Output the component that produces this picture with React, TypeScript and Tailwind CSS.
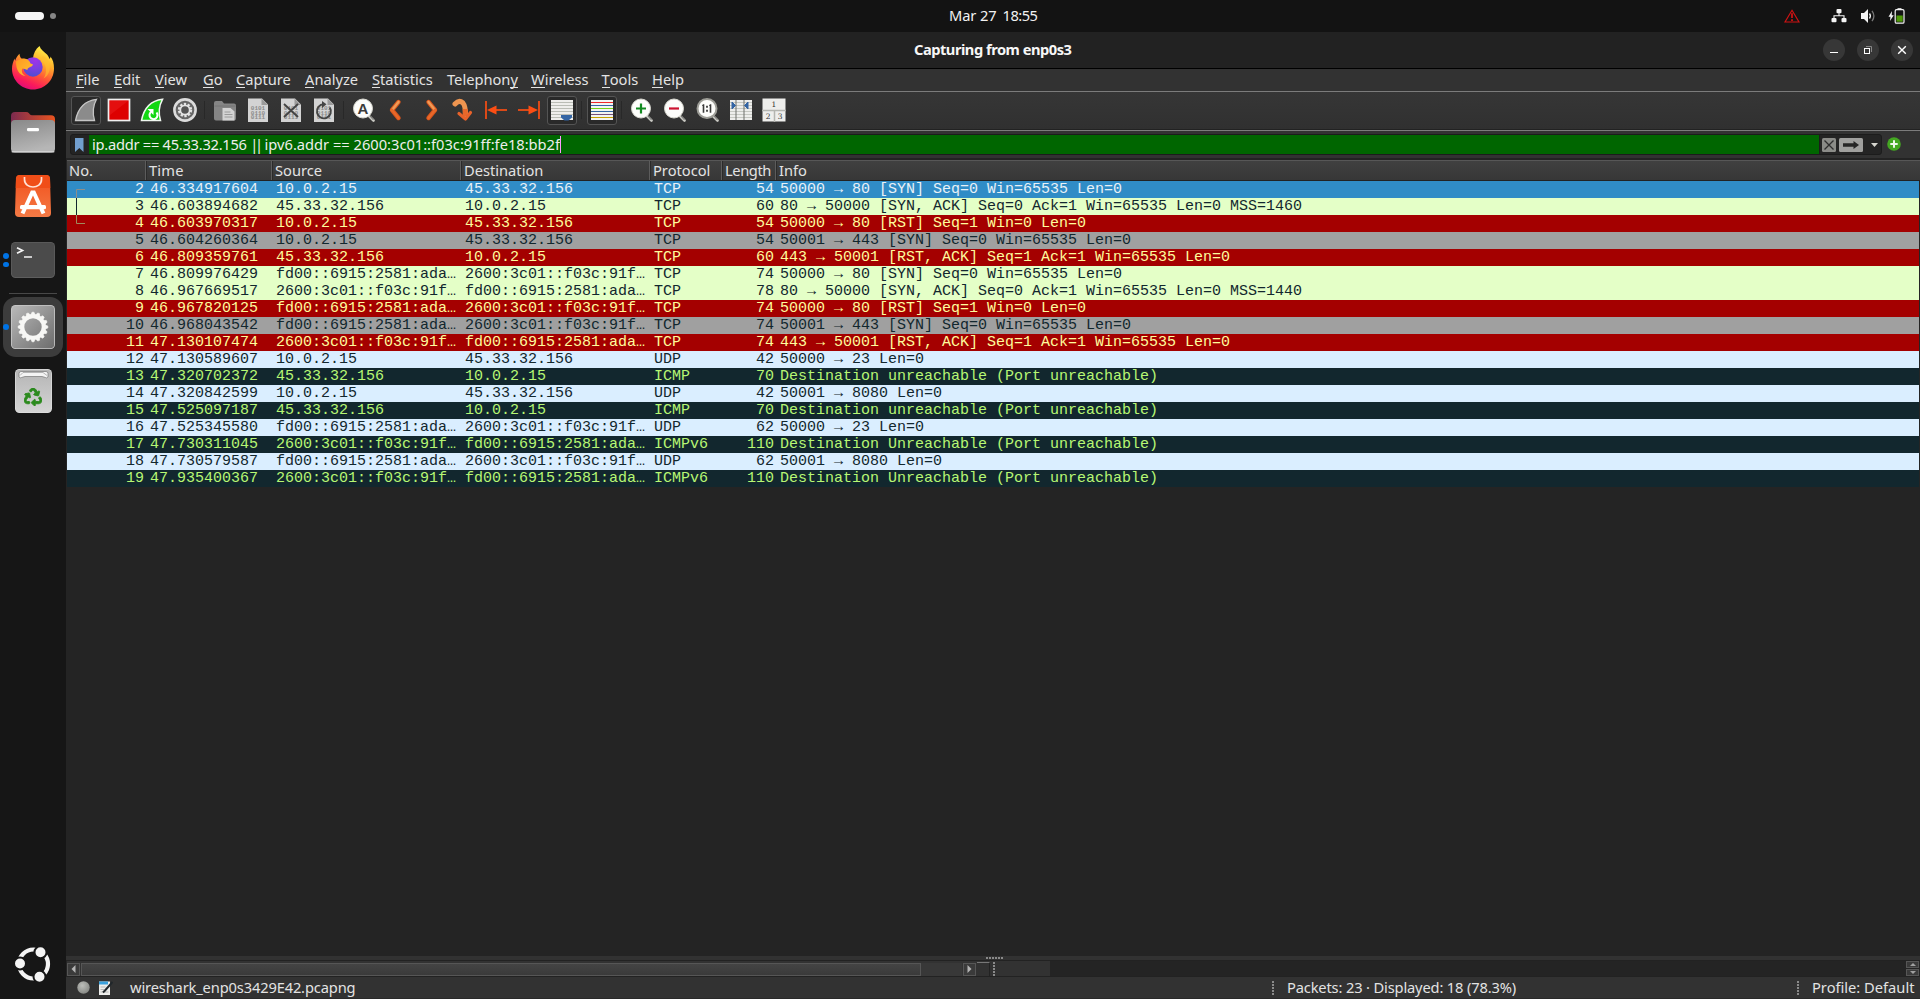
import React from "react";
import { FaRecycle } from "react-icons/fa";

type Kind = "sel" | "tcp" | "rst" | "syn" | "udp" | "icmp";
type Packet = [number, string, string, string, string, number, string, Kind];

const A4 = "10.0.2.15";
const B4 = "45.33.32.156";
const A6 = "fd00::6915:2581:ada…";
const B6 = "2600:3c01::f03c:91f…";

const packets: Packet[] = [
  [2, "46.334917604", A4, B4, "TCP", 54, "50000 → 80 [SYN] Seq=0 Win=65535 Len=0", "sel"],
  [3, "46.603894682", B4, A4, "TCP", 60, "80 → 50000 [SYN, ACK] Seq=0 Ack=1 Win=65535 Len=0 MSS=1460", "tcp"],
  [4, "46.603970317", A4, B4, "TCP", 54, "50000 → 80 [RST] Seq=1 Win=0 Len=0", "rst"],
  [5, "46.604260364", A4, B4, "TCP", 54, "50001 → 443 [SYN] Seq=0 Win=65535 Len=0", "syn"],
  [6, "46.809359761", B4, A4, "TCP", 60, "443 → 50001 [RST, ACK] Seq=1 Ack=1 Win=65535 Len=0", "rst"],
  [7, "46.809976429", A6, B6, "TCP", 74, "50000 → 80 [SYN] Seq=0 Win=65535 Len=0", "tcp"],
  [8, "46.967669517", B6, A6, "TCP", 78, "80 → 50000 [SYN, ACK] Seq=0 Ack=1 Win=65535 Len=0 MSS=1440", "tcp"],
  [9, "46.967820125", A6, B6, "TCP", 74, "50000 → 80 [RST] Seq=1 Win=0 Len=0", "rst"],
  [10, "46.968043542", A6, B6, "TCP", 74, "50001 → 443 [SYN] Seq=0 Win=65535 Len=0", "syn"],
  [11, "47.130107474", B6, A6, "TCP", 74, "443 → 50001 [RST, ACK] Seq=1 Ack=1 Win=65535 Len=0", "rst"],
  [12, "47.130589607", A4, B4, "UDP", 42, "50000 → 23 Len=0", "udp"],
  [13, "47.320702372", B4, A4, "ICMP", 70, "Destination unreachable (Port unreachable)", "icmp"],
  [14, "47.320842599", A4, B4, "UDP", 42, "50001 → 8080 Len=0", "udp"],
  [15, "47.525097187", B4, A4, "ICMP", 70, "Destination unreachable (Port unreachable)", "icmp"],
  [16, "47.525345580", A6, B6, "UDP", 62, "50000 → 23 Len=0", "udp"],
  [17, "47.730311045", B6, A6, "ICMPv6", 110, "Destination Unreachable (Port unreachable)", "icmp"],
  [18, "47.730579587", A6, B6, "UDP", 62, "50001 → 8080 Len=0", "udp"],
  [19, "47.935400367", B6, A6, "ICMPv6", 110, "Destination Unreachable (Port unreachable)", "icmp"],
];

const rowColor: Record<Kind, string> = {
  sel: "bg-[#308cc6] text-[#e8f1f7]",
  tcp: "bg-[#e4ffc7] text-[#12272e]",
  rst: "bg-[#a40000] text-[#fffc9c]",
  syn: "bg-[#a0a0a0] text-[#12272e]",
  udp: "bg-[#daeeff] text-[#12272e]",
  icmp: "bg-[#12272e] text-[#b7f774]",
};

const COLS = "grid grid-cols-[79px_126px_189px_189px_72px_54px_1fr]";

/* ---------- dock ---------- */

function Firefox() {
  return (
    <svg width="44" height="44" viewBox="0 0 44 44">
      <defs>
        <linearGradient id="ffb" x1="0.8" y1="0" x2="0.35" y2="1">
          <stop offset="0.05" stopColor="#fff14a" />
          <stop offset="0.35" stopColor="#ffb02a" />
          <stop offset="0.62" stopColor="#ff5a36" />
          <stop offset="0.85" stopColor="#fb1a5b" />
          <stop offset="1" stopColor="#e00d78" />
        </linearGradient>
        <radialGradient id="ffg" cx="0.6" cy="0.15" r="0.9">
          <stop offset="0" stopColor="#a033e8" />
          <stop offset="0.5" stopColor="#7a3fe0" />
          <stop offset="1" stopColor="#4a4fd0" />
        </radialGradient>
        <linearGradient id="fff" x1="0" y1="0" x2="1" y2="1">
          <stop offset="0" stopColor="#ff9a1f" />
          <stop offset="1" stopColor="#ffc233" />
        </linearGradient>
      </defs>
      <path d="M28.500 0c1 3.500 4.500 5.500 7.500 8.500 1.600 1.700 2 3.500 2.600 4.500.8-.8.900-1.500.8-2.400C42 13.500 43 18 43 22.500 43 34.500 33.500 43.500 22 43.500S1 34 1 23c0-4 1-7.500 2.800-10.500 0 1 .1 1.700.4 2.200.7-2.900 2.300-5 4.300-7 .2 2.200.8 3.700 2 4.900 2.200-.4 4 .1 5.500 1 1.700-1 3.600-1.500 6-1.600C22.500 7.500 24.500 3 28.500 0z" fill="url(#ffb)" />
      <circle cx="22" cy="21" r="9.700" fill="url(#ffg)" />
      <path d="M32 16c3.500 4 4.300 11 .5 16.500 5.500-3 7.700-9.500 5.500-16-.8-2.300-3.500-5.500-6-6.500-1.500 1-2 3.500 0 6z" fill="#ffc02e" opacity="0.600" />
      <path d="M5 15.500c2-1.700 4.500-2.700 7-2.600 3.700-.5 6.700 1.700 7.500 4.600.800.500 2.300.5 2.500 1-.3 1.700-2.400 2.400-4.200 3.200-1.200.6-1.400 1.300-1.300 2.300-2-.5-3.500-1.500-5-1.500-1.700 2.500 0 6 3 7.500C8 29 5 24 5 15.500z" fill="url(#fff)" />
    </svg>
  );
}

function Files() {
  return (
    <svg width="46" height="44" viewBox="0 0 46 44">
      <defs>
        <linearGradient id="flb" x1="0" x2="1">
          <stop offset="0" stopColor="#7b2a4f" />
          <stop offset="1" stopColor="#e95420" />
        </linearGradient>
        <linearGradient id="flf" x1="0" y1="0" x2="0.3" y2="1">
          <stop offset="0" stopColor="#888888" />
          <stop offset="1" stopColor="#b6b6b6" />
        </linearGradient>
      </defs>
      <path d="M1 6q0-4 4-4h11q2 0 3 1.300l1 1.200q.6.700 2 .7h19q4 0 4 4v12H1z" fill="url(#flb)" />
      <rect x="1" y="10" width="44" height="32.500" rx="4" fill="url(#flf)" />
      <rect x="1.500" y="41" width="43" height="1.500" rx="0.700" fill="#d0d0d0" />
      <rect x="17" y="18" width="12" height="3.200" rx="1.200" fill="#fff" />
    </svg>
  );
}

function AppCenter() {
  return (
    <svg width="36" height="42" viewBox="0 0 36 42">
      <defs>
        <linearGradient id="acb" x1="0" y1="0" x2="0" y2="1">
          <stop offset="0" stopColor="#f2501c" />
          <stop offset="1" stopColor="#f47a45" />
        </linearGradient>
      </defs>
      <path d="M1 3.500Q1.200 0 4.500 0h27Q34.800 0 35 3.500L36 38q0 4-4 4H4q-4 0-4-4z" fill="url(#acb)" />
      <path d="M1 3.500Q1.200 0 4.500 0h27Q34.800 0 35 3.500L35.300 13H.7z" fill="#f04e18" />
      <path d="M9.500 2v2.500c0 10 17 10 17 0V2" fill="none" stroke="#ffe2d6" strokeWidth="1.700" />
      <path d="M11 31L17.200 17.500h1.600L25 31M9.800 33.500L7.500 38.500M26.200 33.500l2.300 5" fill="none" stroke="#fff" strokeWidth="4" />
      <rect x="5" y="30" width="26" height="4.200" rx="1.500" fill="#fff" />
    </svg>
  );
}

function TerminalIcon() {
  return (
    <svg width="44" height="36" viewBox="0 0 44 36">
      <rect width="44" height="36" rx="4.500" fill="#5e5e5e" />
      <rect x="0.800" y="0.800" width="42.400" height="34.200" rx="4" fill="#4b4b4b" />
      <path d="M6 5.800l5.500 2.700L6 11.200" fill="none" stroke="#f4f4f4" strokeWidth="1.700" />
      <path d="M13 15h8" stroke="#f4f4f4" strokeWidth="1.500" />
    </svg>
  );
}

function SettingsIcon() {
  const teeth = Array.from({ length: 16 }, (_, i) => i * 22.5);
  return (
    <svg width="44" height="44" viewBox="0 0 44 44">
      <defs>
        <linearGradient id="stb" x1="0" y1="0" x2="1" y2="1">
          <stop offset="0" stopColor="#b9b9b9" />
          <stop offset="1" stopColor="#6d6d6d" />
        </linearGradient>
      </defs>
      <rect width="44" height="44" rx="4.500" fill="#c9c9c9" />
      <rect x="0.800" y="0.800" width="42.400" height="42.400" rx="4" fill="url(#stb)" />
      {teeth.map((a) => (
        <path key={a} d="M20 9.800L21 7.200h2L24 9.800z" fill="#f7f7f5" stroke="#f7f7f5" strokeWidth="0.600" transform={`rotate(${a} 22 22)`} />
      ))}
      <circle cx="22" cy="22" r="10.800" fill="none" stroke="#f7f7f5" strokeWidth="4.200" />
    </svg>
  );
}

function Trash() {
  return (
    <div className="relative flex h-11 w-[37px] justify-center">
      <svg className="absolute inset-0" width="37" height="44" viewBox="0 0 37 44">
        <defs>
          <linearGradient id="trb" x1="0" y1="0" x2="0" y2="1">
            <stop offset="0" stopColor="#b5b5b5" />
            <stop offset="1" stopColor="#d4d4d4" />
          </linearGradient>
        </defs>
        <rect width="37" height="44" rx="4.500" fill="#dedede" />
        <rect x="0.700" y="0.700" width="35.600" height="42.600" rx="4" fill="url(#trb)" />
        <path d="M4 8V4.500q0-2 2-2h25q2 0 2 2V8q-1.500 1.500-2.500.5L27 7.500H10L6.500 8.500Q5 9.500 4 8z" fill="#f4f4f4" stroke="#777" strokeWidth="0.700" />
        <path d="M5 6.500l3-3h20l4 3" fill="none" stroke="#999" strokeWidth="0.700" />
      </svg>
      <FaRecycle className="relative mt-[19px] stroke-[#2b8a1d] stroke-[26px] text-[18px] text-[#2b8a1d]" />
    </div>
  );
}

function UbuntuLogo() {
  return (
    <svg width="36" height="36" viewBox="0 0 36 36">
      <circle cx="18.500" cy="18" r="14.500" fill="none" stroke="#f4f4f4" strokeWidth="4.200" />
      {[[5, 17.500], [25.500, 6.200], [24.500, 30.700]].map(([x, y]) => (
        <circle key={x} cx={x} cy={y} r="6" fill="#f4f4f4" stroke="#161616" strokeWidth="2" />
      ))}
    </svg>
  );
}

function Slot({ children, dots = 0, active = false }: { children: React.ReactNode; dots?: number; active?: boolean }) {
  return (
    <div className="relative flex h-16 w-[66px] shrink-0 items-center justify-center">
      <div className={active ? "flex h-[60px] w-[60px] items-center justify-center rounded-[13px] bg-[#3c3c3c]" : "flex"}>{children}</div>
      <div className="absolute top-0 left-[3px] flex h-full flex-col items-center justify-center gap-[3px]">
        {Array.from({ length: dots }, (_, i) => (
          <span key={i} className="h-[5.500px] w-[5.500px] rounded-full bg-[#0073e5]" />
        ))}
      </div>
    </div>
  );
}

function Dock() {
  return (
    <aside className="flex w-[66px] shrink-0 flex-col bg-[#161616] pt-1">
      <Slot><Firefox /></Slot>
      <Slot><Files /></Slot>
      <Slot><AppCenter /></Slot>
      <Slot dots={2}><TerminalIcon /></Slot>
      <div className="flex h-[3px] items-center justify-center"><span className="h-px w-12 bg-[#484848]" /></div>
      <Slot active dots={1}><SettingsIcon /></Slot>
      <Slot><Trash /></Slot>
      <div className="mt-auto flex justify-center pb-[17px]"><UbuntuLogo /></div>
    </aside>
  );
}

/* ---------- top panel ---------- */

function TopBar() {
  return (
    <header className="grid h-8 grid-cols-[949px_1fr_auto] bg-[#131313] text-[#f2f2f2]">
      <div className="flex items-center gap-[6px] pl-[15px]">
        <span className="h-2 w-[29px] rounded-full bg-[#f6f6f6]" />
        <span className="h-[6px] w-[6px] rounded-full bg-[#868686]" />
      </div>
      <div className="flex text-[14.670px] leading-[30px]">
        <span className="w-[53.500px] tracking-[-0.100px]">Mar 27</span>
        <span className="tracking-[-0.500px]">18:55</span>
      </div>
      <div className="flex items-center pr-[15px]">
        <svg width="16" height="14" viewBox="0 0 16 14" className="mr-[31px]">
          <path d="M8 1.300L15 13H1z" fill="none" stroke="#cf1313" strokeWidth="1.200" />
          <path d="M8 4.200v4.800M8 10.300v1.600" stroke="#cf1313" strokeWidth="1.800" />
        </svg>
        <svg width="16" height="16" viewBox="0 0 16 16" className="mr-[13px]" fill="#f4f4f4">
          <rect x="5.500" y="1" width="5" height="4.300" rx="1" />
          <rect x="0.500" y="10" width="5" height="4.300" rx="1" />
          <rect x="10.500" y="10" width="5" height="4.300" rx="1" />
          <path d="M3 11V7.700h10V11M8 5v3" fill="none" stroke="#f4f4f4" strokeWidth="1.100" />
        </svg>
        <svg width="16" height="16" viewBox="0 0 16 16" className="mr-3">
          <path d="M1 5h3l4-4v14l-4-4H1z" fill="#f4f4f4" />
          <path d="M9.500 5.500q1.800 2.500 0 5" fill="none" stroke="#f4f4f4" strokeWidth="1.300" />
          <path d="M12 2.800q3.800 5.200 0 10.400" fill="none" stroke="#777" strokeWidth="1.300" />
        </svg>
        <svg width="17" height="16" viewBox="0 0 17 16">
          <path d="M4 3L.500 8.800h2L2 13l3.700-5.800h-2z" fill="#f4f4f4" />
          <rect x="7.200" y="1.700" width="8.800" height="13.500" rx="1.300" fill="none" stroke="#f4f4f4" strokeWidth="1.200" />
          <rect x="9.500" y="0.200" width="4" height="1.500" fill="#f4f4f4" />
          <rect x="8.500" y="7.500" width="6.200" height="6.200" fill="#4e9a06" />
        </svg>
      </div>
    </header>
  );
}

function TitleBar() {
  const btn = "flex h-[22px] w-[22px] items-center justify-center rounded-full bg-[#373737]";
  return (
    <div className="grid h-9 grid-cols-[848px_1fr_auto] bg-[#222222]">
      <span />
      <div className="text-[14.670px] leading-[35px] font-bold tracking-[-0.490px] text-[#f7f7f7]">Capturing from enp0s3</div>
      <div className="flex items-center gap-3 pr-[7px]">
        <span className={btn}><svg width="10" height="10" viewBox="0 0 10 10"><path d="M1 7.500h8" stroke="#fff" /></svg></span>
        <span className={btn}>
          <svg width="10" height="10" viewBox="0 0 10 10" fill="none">
            <path d="M3 1.500h5.500V7" stroke="#888" />
            <rect x="1.500" y="3.500" width="5" height="5" stroke="#fff" />
          </svg>
        </span>
        <span className={btn}><svg width="10" height="10" viewBox="0 0 10 10"><path d="M1.200 1.200l7.600 7.600M8.800 1.200L1.200 8.800" stroke="#fff" strokeWidth="1.400" /></svg></span>
      </div>
    </div>
  );
}

/* ---------- menu ---------- */

const menus: [string, string, string, string][] = [
  ["", "F", "ile", "w-[38px]"],
  ["", "E", "dit", "w-[41px]"],
  ["", "V", "iew", "w-[48px]"],
  ["", "G", "o", "w-[33px]"],
  ["", "C", "apture", "w-[69px]"],
  ["", "A", "nalyze", "w-[67px]"],
  ["", "S", "tatistics", "w-[75px]"],
  ["Telephon", "y", "", "w-[84px]"],
  ["", "W", "ireless", "w-[70.500px]"],
  ["", "T", "ools", "w-[50.500px]"],
  ["", "H", "elp", "w-[50px]"],
];

function MenuBar() {
  return (
    <nav className="flex h-[22px] bg-[#323232] pl-[10px] text-[14.670px] leading-[21px] text-[#e3e3e3]">
      {menus.map(([pre, key, post, w]) => (
        <span key={pre + key} className={`${w} shrink-0 whitespace-nowrap`}>
          {pre}
          <span className="inline-block h-[19px] border-b-[1.500px] border-[#e3e3e3] align-top">{key}</span>
          {post}
        </span>
      ))}
    </nav>
  );
}

/* ---------- toolbar ---------- */

function Icon({ children }: { children: React.ReactNode }) {
  return <svg width="24" height="24" viewBox="0 0 24 24" fill="none">{children}</svg>;
}

const FIN = "M1.500 22.500C3.500 12 8.500 3 22.500 1.300C18.500 8.500 18.500 15.500 20.500 22.500Z";

function Doc({ children }: { children?: React.ReactNode }) {
  return (
    <Icon>
      <path d="M2 .5h14l6 6v17.500H2z" fill="#d3d3d3" />
      <path d="M15.500 .5v6.500H22z" fill="#9a9a9a" />
      {["0101", "0110", "0111"].map((bits, i) => (
        <text key={bits} x="4.800" y={12 + i * 4.5} fontSize="6" fontWeight="700" fontFamily="Liberation Mono, monospace" fill="#8b8b8b">{bits}</text>
      ))}
      {children}
    </Icon>
  );
}

function Lens({ children, dark = false }: { children: React.ReactNode; dark?: boolean }) {
  return (
    <Icon>
      <path d="M16.500 17.500l5 5" stroke="#c9c9c3" strokeWidth="2.600" strokeLinecap="round" />
      <path d="M17.500 17.500l4 4.500" stroke="#555" strokeWidth="0.800" />
      <circle cx="11" cy="10.500" r="9.500" fill="#fdfdfb" stroke={dark ? "#9d9d97" : "#d8d8d0"} strokeWidth={dark ? "2" : "1"} />
      {children}
    </Icon>
  );
}

function Chevron({ flip = false }: { flip?: boolean }) {
  return (
    <Icon>
      <g transform={flip ? "translate(25 0) scale(-1 1)" : "translate(-1 0)"}>
        <path d="M14.500 4L8 12l6.500 8" stroke="#d9541b" strokeWidth="4.400" strokeLinecap="round" strokeLinejoin="round" />
        <path d="M14.500 4L8 12" stroke="#f09a55" strokeWidth="2.600" strokeLinecap="round" />
        <path d="M8 12l6.500 8" stroke="#e8682a" strokeWidth="2.600" strokeLinecap="round" />
      </g>
    </Icon>
  );
}

function Tool({ children, on = false }: { children: React.ReactNode; on?: boolean }) {
  return (
    <span className="flex w-[33px] shrink-0 items-center justify-center">
      <span className={on ? "flex h-[29px] w-[30px] items-center justify-center rounded-[3px] border border-[#545454] bg-[#292929]" : "flex"}>{children}</span>
    </span>
  );
}

function Sep() {
  return <span className="ml-[3px] h-[18px] w-1 shrink-0 border-l border-[#282828]" />;
}

function Toolbar() {
  return (
    <div className="flex h-[37px] items-center bg-gradient-to-b from-[#363636] to-[#303030] pb-px pl-[3px]">
      <Tool on>
        <Icon><path d={FIN} fill="#8b8b8b" stroke="#c6c6c6" strokeWidth="1.300" /></Icon>
      </Tool>
      <Tool>
        <Icon>
          <rect x="1.500" y="1.500" width="21" height="21" fill="#dd0000" stroke="#f0f0f0" strokeWidth="1.700" />
          <path d="M3 3h18L3 17z" fill="#ee2222" opacity="0.450" />
        </Icon>
      </Tool>
      <Tool>
        <Icon>
          <path d={FIN} fill="#12d812" stroke="#f0f7f0" strokeWidth="1.500" />
          <path d="M16.500 14.500a4 4 0 1 1-5.500-.5" stroke="#fff" strokeWidth="2" />
          <path d="M7.500 11h6v6z" fill="#fff" />
        </Icon>
      </Tool>
      <Tool>
        <Icon>
          <circle cx="12" cy="12" r="10.600" fill="#666" stroke="#dcdcdc" strokeWidth="2.600" />
          <circle cx="12" cy="12" r="6" stroke="#e4e4e4" strokeWidth="2.400" strokeDasharray="2.300 1.470" />
          <circle cx="12" cy="12" r="4.700" fill="#555" stroke="#e4e4e4" strokeWidth="1.800" />
        </Icon>
      </Tool>
      <Sep />
      <Tool>
        <Icon>
          <path d="M1 5q0-2 2-2h6l2 2.500h10q2 0 2 2v13q0 2-2 2H3q-2 0-2-2z" fill="#858585" />
          <path d="M1.500 8h21" stroke="#747474" />
          <path d="M9.500 10h8l4 3.500v9h-12z" fill="#d3d3d3" />
          <path d="M11.500 14h6M11.500 16.500h8M11.500 19h8" stroke="#9a9a9a" />
        </Icon>
      </Tool>
      <Tool><Doc /></Tool>
      <Tool><Doc><path d="M5 6l14 13M19 6L5 19" stroke="#444" strokeWidth="1.900" /></Doc></Tool>
      <Tool>
        <Doc>
          <path d="M17.800 9.500a7 7 0 1 1-6-3.200" stroke="#444" strokeWidth="1.900" />
          <path d="M10 3l4.500 3.300L10 10z" fill="#444" />
        </Doc>
      </Tool>
      <Sep />
      <Tool>
        <Lens><text x="11" y="15.800" textAnchor="middle" fontSize="15" fontWeight="700" fontFamily="Liberation Sans, sans-serif" fill="#3c3c3c">A</text></Lens>
      </Tool>
      <Tool><Chevron /></Tool>
      <Tool><Chevron flip /></Tool>
      <Tool>
        <Icon>
          <path d="M4 6Q8 1.500 12 5q2.500 3 2.500 12" stroke="#ee9550" strokeWidth="5" strokeLinecap="round" />
          <path d="M14.200 11v7" stroke="#e8682a" strokeWidth="5" />
          <path d="M8 15.500l6.500 5.500 5-6.500" stroke="#e8622a" strokeWidth="3.200" strokeLinecap="round" strokeLinejoin="round" />
        </Icon>
      </Tool>
      <Tool>
        <Icon><path d="M2 3v18" stroke="#fb4e14" strokeWidth="1.700" /><path d="M10 12h13" stroke="#fb4e14" strokeWidth="1.700" /><path d="M3 12l9.500-4.500v9z" fill="#fb4e14" /></Icon>
      </Tool>
      <Tool>
        <Icon><path d="M22 3v18" stroke="#fb4e14" strokeWidth="1.700" /><path d="M1 12h13" stroke="#fb4e14" strokeWidth="1.700" /><path d="M21 12l-9.500-4.500v9z" fill="#fb4e14" /></Icon>
      </Tool>
      <Tool on>
        <Icon>
          <rect x="1" y="2" width="22" height="20" fill="#eeeeec" />
          <path d="M1 4.500h22M1 7.500h22M1 10.500h22M1 13.500h22M1 16.500h22M1 19.500h22" stroke="#babdb6" />
          <path d="M11 17h11v2.500l-3.500 3h-4l-3.500-3z" fill="#3465a4" />
        </Icon>
      </Tool>
      <Sep />
      <Tool on>
        <Icon>
          <rect x="1" y="2" width="22" height="20" fill="#f3f3f1" />
          <path d="M1 4.500h22" stroke="#ef2929" />
          <path d="M1 7.500h22" stroke="#3465a4" />
          <path d="M1 10.500h22" stroke="#73d216" />
          <path d="M1 13.500h22" stroke="#3465a4" />
          <path d="M1 16.500h22" stroke="#75507b" />
          <path d="M1 19.500h22" stroke="#c4a000" />
        </Icon>
      </Tool>
      <Sep />
      <Tool><Lens><path d="M11 5.500v10M6 10.500h10" stroke="#128a20" strokeWidth="2.200" /></Lens></Tool>
      <Tool><Lens><path d="M6 10.500h10" stroke="#cc1230" strokeWidth="2.200" /></Lens></Tool>
      <Tool>
        <Lens dark>
          <path d="M7.500 6.300v8.400M14.500 6.300v8.400" stroke="#3a3a3a" strokeWidth="1.600" />
          <path d="M6.300 7.500h1.500M13.300 7.500h1.500" stroke="#3a3a3a" strokeWidth="1.200" />
          <path d="M11 7.800v2M11 11.800v2" stroke="#3a3a3a" strokeWidth="1.800" />
        </Lens>
      </Tool>
      <Tool>
        <Icon>
          <rect x="1" y="2" width="22" height="20" fill="#eeeeec" />
          <path d="M1 4.500h22M1 7.500h22M1 10.500h22M1 13.500h22M1 16.500h22M1 19.500h22" stroke="#c6c8c2" />
          <path d="M7 2v20M15 2v20" stroke="#6f716d" />
          <path d="M3 4l3.500 3.500L3 11zM19 4l-3.500 3.500L19 11z" fill="#3465a4" stroke="#3465a4" />
        </Icon>
      </Tool>
      <Tool>
        <Icon>
          <rect x="0.500" y="0.500" width="23" height="23" fill="#eeeeec" />
          <path d="M0 12.500h24M12.500 12v12" stroke="#b4b5b0" strokeWidth="1.500" />
          <g fill="#333" fontSize="7.500" fontFamily="DejaVu Serif, serif" textAnchor="middle">
            <text x="12" y="9">1</text><text x="6.200" y="20.800">2</text><text x="18.200" y="20.800">3</text>
          </g>
        </Icon>
      </Tool>
    </div>
  );
}

/* ---------- filter ---------- */

function FilterBar() {
  return (
    <div className="flex h-[27px] bg-[#323232] pt-[3px] pl-1">
      <div className="flex h-[21px] w-[1812px] overflow-hidden rounded-[3px] border border-[#1c1c1c] bg-[#242424]">
        <div className="flex w-[18px] items-center pl-1">
          <svg width="9" height="14" viewBox="0 0 9 14"><path d="M0 0h8.500v14L4.300 10 0 14z" fill="#729fcf" /></svg>
        </div>
        <div className="flex w-[1730px] items-center bg-[#006600] pl-[3px] text-[14.670px] leading-[19px] text-[#eeeeec]">
          <span className="whitespace-pre tracking-[-0.260px]">ip.addr == 45.33.32.156 <span className="tracking-[-3.200px]">||</span><span className="ml-[0.800px] tracking-[0px]"> ipv6.addr == 2600:3c01::f03c:91ff:fe18:bb2f</span></span>
          <span className="h-[17px] w-px bg-[#ff99ff]" />
        </div>
        <div className="flex flex-1 items-center border-l border-[#1c1c1c] pl-[2px]">
          <svg width="14" height="14" viewBox="0 0 14 14"><rect width="14" height="14" rx="1.500" fill="#8b8c88" /><path d="M2.500 2.500l9 9M11.500 2.500l-9 9" stroke="#2e2e2e" strokeWidth="1.300" /></svg>
          <svg className="ml-[3px]" width="24" height="14" viewBox="0 0 24 14"><rect width="24" height="14" rx="1.500" fill="#a0a09e" /><path d="M4 5.200h10.500V3L20 7l-5.500 4V8.800H4z" fill="#262626" /></svg>
          <svg className="ml-2" width="7" height="4" viewBox="0 0 7 4"><path d="M0 0h7L3.500 4z" fill="#d6d6cf" /></svg>
        </div>
      </div>
      <svg className="mt-[3px] ml-[5px]" width="14" height="14" viewBox="0 0 14 14">
        <circle cx="7" cy="7" r="6.800" fill="#44a722" />
        <path d="M7 3.300v7.400M3.300 7h7.400" stroke="#eef7ea" strokeWidth="2" />
      </svg>
    </div>
  );
}

/* ---------- packet list ---------- */

function PacketList() {
  const th = "border-r border-[#5c5c5c] shadow-[1px_0_0_#2b2b2b]";
  return (
    <section className="flex min-h-0 flex-1 flex-col border-t-2 border-[#232323] bg-[#242424] pl-px">
      <div className={`${COLS} h-[21px] border-t border-b border-t-[#575757] border-b-[#222222] bg-gradient-to-b from-[#404040] to-[#373737] text-[14.670px] leading-[19px] text-[#e3e3e3]`}>
        <span className={`${th} pl-[2px]`}>No.</span>
        <span className={`${th} pl-[3px] tracking-[0.200px]`}>Time</span>
        <span className={`${th} pl-[3px]`}>Source</span>
        <span className={`${th} pl-[3px]`}>Destination</span>
        <span className={`${th} pl-[3px]`}>Protocol</span>
        <span className={`${th} pl-[3px] tracking-[-0.400px]`}>Length</span>
        <span className="pl-[3px]">Info</span>
      </div>
      <div className="relative font-['Liberation_Mono',monospace] text-[15px] leading-[17px]">
        {packets.map(([no, time, src, dst, proto, len, info, kind]) => (
          <div key={no} className={`${COLS} ${rowColor[kind]} mr-px h-[17px] whitespace-pre`}>
            <span className="pr-[2px] text-right">{no}</span>
            <span className="pl-1">{time}</span>
            <span className="pl-1">{src}</span>
            <span className="pl-1">{dst}</span>
            <span className="pl-1">{proto}</span>
            <span className="pr-[2px] text-right">{len}</span>
            <span className="pl-[4px]">{info}</span>
          </div>
        ))}
        <svg className="absolute top-2 left-[9px]" width="10" height="36" viewBox="0 0 10 36" fill="none">
          <path d="M9 .5H.5V9" stroke="#8a8f8c" />
          <path d="M.5 9v17" stroke="#12272e" />
          <path d="M.5 26v8.500H9" stroke="#a08a5c" />
        </svg>
      </div>
    </section>
  );
}

/* ---------- bottom ---------- */

function Grip({ vertical = false, count = 5 }: { vertical?: boolean; count?: number }) {
  return (
    <span className={vertical ? "flex shrink-0 flex-col gap-px" : "flex shrink-0 gap-px"}>
      {Array.from({ length: count }, (_, i) => (
        <span key={i} className="h-[2px] w-[2px] bg-[#8a8a8a]" />
      ))}
    </span>
  );
}

function SplitPanes() {
  const btn = "flex h-[13px] w-[13px] shrink-0 items-center justify-center border border-[#565656] bg-[#3a3a3a]";
  return (
    <>
      <div className="flex h-1 items-center bg-[#323232] pl-[920px]"><Grip count={6} /></div>
      <div className="flex h-[17px] border-t border-b border-[#222222] bg-[#242424] pl-px">
        <div className="flex w-[930px] items-center bg-[#323232] pt-px">
          <span className={btn}><svg width="5" height="8" viewBox="0 0 5 8"><path d="M4.500 0v8L.500 4z" fill="#b4b4b4" /></svg></span>
          <span className="ml-px h-[13px] w-[840px] border border-[#565656] bg-gradient-to-b from-[#444444] to-[#3a3a3a]" />
          <span className="h-[13px] w-[41px] bg-[#383838]" />
          <span className={`${btn} ml-[1px]`}><svg width="5" height="8" viewBox="0 0 5 8"><path d="M.500 0v8L4.500 4z" fill="#b4b4b4" /></svg></span>
          <span className="ml-[1px] h-full w-[13px] border-t border-r border-t-[#777777] border-r-[#222222]" />
          <span className="ml-[3px]"><Grip vertical /></span>
        </div>
        <span className="w-[53px] bg-[#323232]" />
        <div className="mr-px ml-auto flex flex-col justify-between">
          {["M3 0L6 3H0z", "M0 0h6L3 3z"].map((d) => (
            <span key={d} className="flex h-[7px] w-[13px] items-center justify-center border border-[#565656] bg-[#3a3a3a]">
              <svg width="6" height="3" viewBox="0 0 6 3"><path d={d} fill="#a0a0a0" /></svg>
            </span>
          ))}
        </div>
      </div>
    </>
  );
}

function StatusBar() {
  return (
    <footer className="flex h-[22px] items-center border-b border-[#292929] bg-[#323232] pl-[11px] text-[14.670px] leading-[21px] whitespace-nowrap text-[#e3e3e3]">
      <svg width="13" height="13" viewBox="0 0 13 13">
        <defs><radialGradient id="led" cx="0.400" cy="0.350" r="0.700"><stop offset="0" stopColor="#bcbeba" /><stop offset="1" stopColor="#858783" /></radialGradient></defs>
        <circle cx="6.500" cy="6.500" r="6.200" fill="url(#led)" />
      </svg>
      <svg className="ml-[9px]" width="14" height="14" viewBox="0 0 14 14">
        <rect x="0" y="0.500" width="11" height="13.500" fill="#eeeeec" />
        <rect x="0" y="0.500" width="9" height="3" fill="#3aa0dc" />
        <path d="M1.500 6h5M1.500 8.500h4M1.500 11h8" stroke="#aaa" strokeWidth="0.800" />
        <path d="M13.500 1L6 9.500l-2 2" stroke="#20262a" strokeWidth="2" fill="none" />
      </svg>
      <span className="ml-[17px] w-[1142px] tracking-[-0.140px]">wireshark_enp0s3429E42.pcapng</span>
      <Grip vertical />
      <span className="ml-[13px] w-[510px] tracking-[-0.150px]">Packets: 23 · Displayed: 18 (78.3%)</span>
      <Grip vertical />
      <span className="ml-[13px]">Profile: Default</span>
    </footer>
  );
}

export default function App() {
  return (
    <div className="flex h-[999px] w-[1920px] flex-col overflow-hidden bg-[#161616] font-['Noto_Sans',sans-serif]">
      <TopBar />
      <div className="flex min-h-0 flex-1">
        <Dock />
        <main className="flex min-w-0 flex-1 flex-col">
          <TitleBar />
          <div className="h-px bg-black" />
          <MenuBar />
          <div className="h-px bg-[#7c7c7c]" />
          <Toolbar />
          <div className="h-px bg-[#222222]" />
          <div className="h-px bg-[#7c7c7c]" />
          <FilterBar />
          <PacketList />
          <SplitPanes />
          <StatusBar />
        </main>
      </div>
    </div>
  );
}
